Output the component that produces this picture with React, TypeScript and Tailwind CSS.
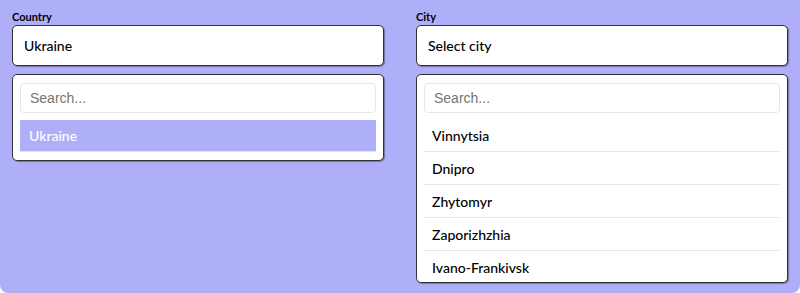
const cities = ["Vinnytsia", "Dnipro", "Zhytomyr", "Zaporizhzhia", "Ivano-Frankivsk"];

const font = { fontFamily: "Lato, 'Noto Sans', sans-serif" };

function SearchBox() {
  return (
    <div className="h-[30px] shrink-0 border border-[#e6e6e6] rounded-[4px] flex items-center px-[9px] bg-white">
      <span className="text-[14px] text-[#757575] font-['Liberation_Sans',Arial,sans-serif]">Search...</span>
    </div>
  );
}

function Field({ label, value, children, tall }: { label: string; value: string; children: React.ReactNode; tall?: boolean }) {
  return (
    <div className="w-[372px] flex flex-col">
      <div className="text-[11px] font-bold leading-4 text-black h-4">{label}</div>
      <div className="h-[41px] border border-[#333] rounded-[5px] bg-white px-[11px] flex items-center text-[14px] font-medium text-black shadow-[1px_1px_1px_rgba(0,0,0,0.35)]">
        {value}
      </div>
      <div
        className={
          "mt-2 border border-[#333] rounded-[5px] bg-white px-[7px] pt-2 flex flex-col overflow-hidden shadow-[1px_1px_1px_rgba(0,0,0,0.35)] " +
          (tall ? "h-[209px] gap-[6px]" : "pb-2 gap-[7px]")
        }
      >
        <SearchBox />
        <div className="flex flex-col shrink-0">{children}</div>
      </div>
    </div>
  );
}

export default function App() {
  return (
    <div style={font} className="w-[800px] h-[293px] bg-[#afaff9] rounded-b-lg px-3 pt-[9px] flex gap-8 overflow-hidden">
      <Field label="Country" value="Ukraine">
        <div className="h-[32px] bg-[#afaff9] flex items-center px-[9px] text-white text-[14px] font-medium border-b border-[#e4e4f8]">
          Ukraine
        </div>
      </Field>
      <Field label="City" value="Select city" tall>
        {cities.map((c, i) => (
          <div
            key={c}
            className={
              "h-[33px] shrink-0 flex items-center px-2 text-[14px] font-medium text-black " +
              (i < cities.length - 1 ? "border-b border-[#e5e7eb]" : "")
            }
          >
            {c}
          </div>
        ))}
      </Field>
    </div>
  );
}
